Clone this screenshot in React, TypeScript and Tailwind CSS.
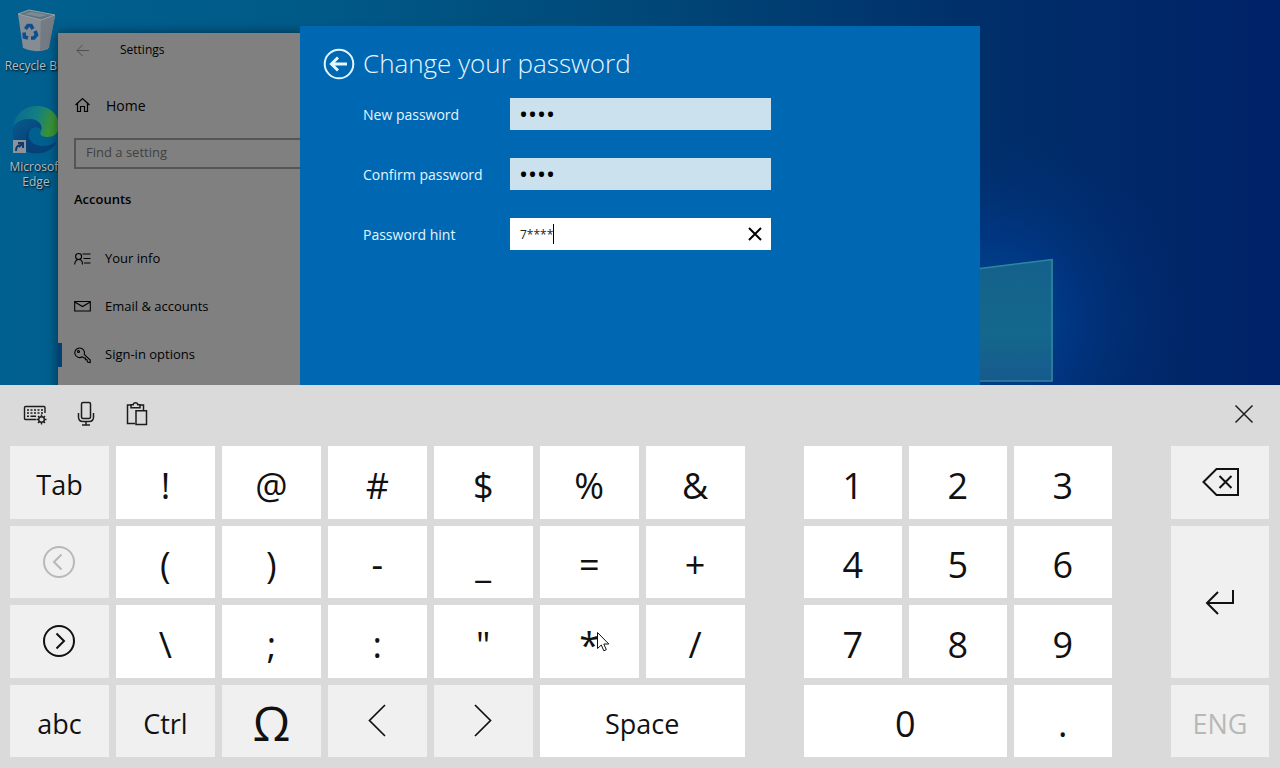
import { useState } from 'react';
import type { ReactNode } from 'react';

type KeyProps = {
  label: string;
  size?: 'symbol' | 'word' | 'large';
  muted?: boolean;
  disabled?: boolean;
  className?: string;
  onPress?: () => void;
  children?: ReactNode;
};

const sizes = {
  symbol: 'text-[36px]',
  word: 'text-[27px]',
  large: 'text-[48px] font-medium',
};

function Key({ label, size = 'symbol', muted, disabled, className = '', onPress, children }: KeyProps) {
  return (
    <button
      type="button"
      aria-label={label}
      disabled={disabled}
      onClick={onPress}
      className={`relative flex items-center justify-center leading-none ${sizes[size]} ${
        muted ? 'bg-[#f0f0f0]' : 'bg-white'
      } ${disabled ? 'text-[#b8b8b8]' : 'text-[#111111]'} ${className}`}
    >
      {children || <span className={size === 'symbol' ? 'pt-[7px]' : 'pt-[5px]'}>{label}</span>}
    </button>
  );
}

function Wallpaper() {
  return (
    <svg className="absolute inset-0 h-full w-full" viewBox="0 0 1280 385" preserveAspectRatio="xMinYMin slice" aria-hidden="true">
      <defs>
        <linearGradient id="sky" x1="0" y1="0" x2="1" y2="0">
          <stop offset="0" stopColor="#00608f" />
          <stop offset="0.25" stopColor="#005a88" />
          <stop offset="0.5" stopColor="#004878" />
          <stop offset="0.75" stopColor="#00306a" />
          <stop offset="1" stopColor="#002268" />
        </linearGradient>
        <radialGradient id="glow" gradientUnits="userSpaceOnUse" cx="990" cy="320" r="200">
          <stop offset="0" stopColor="#005596" stopOpacity="0.9" />
          <stop offset="0.4" stopColor="#003a8c" stopOpacity="0.7" />
          <stop offset="1" stopColor="#002c70" stopOpacity="0" />
        </radialGradient>
        <linearGradient id="pane" x1="0" y1="0" x2="0" y2="1">
          <stop offset="0" stopColor="#14618c" />
          <stop offset="0.6" stopColor="#14688c" />
          <stop offset="1" stopColor="#175a8e" />
        </linearGradient>
      </defs>
      <rect width="1280" height="385" fill="url(#sky)" />
      <rect width="1280" height="385" fill="url(#glow)" />
      <path d="M960 271 L1053 259 V381 H960 Z" fill="url(#pane)" />
      <path d="M960 271 L1052 259.500 V381 H960" fill="none" stroke="#2f86a0" strokeWidth="1.500" />
    </svg>
  );
}

function RecycleBinIcon() {
  return (
    <svg width="42" height="44" viewBox="0 0 42 44" aria-hidden="true">
      <path d="M3 5 L8 39 Q20 45 33 40 L40 7 L26 10 Z" fill="#858c93" />
      <path d="M26 10 L40 7 L34 39 L25 42 Z" fill="#747b83" />
      <path d="M3 5 L14 1 L40 6 L26 11 Z" fill="#5f747f" stroke="#98a1a7" strokeWidth="1" />
      <path d="M9 5 L16 3 L33 6 L25 8 Z" fill="#7c8b93" />
      <g fill="none" stroke="#0c4f91" strokeWidth="3.600">
        <path d="M10.500 20 L13 16.500 H16 L18 20" />
        <path d="M20 22 L21.500 26 L19 29 H16" />
        <path d="M13 29 L9.500 28 L9 23.500" />
      </g>
    </svg>
  );
}

function EdgeIcon() {
  return (
    <svg width="48" height="49" viewBox="0 0 48 49" aria-hidden="true">
      <defs>
        <linearGradient id="edgeTop" x1="0" y1="0.300" x2="1" y2="0.500">
          <stop offset="0" stopColor="#086b91" />
          <stop offset="0.5" stopColor="#137f83" />
          <stop offset="0.85" stopColor="#3a9336" />
        </linearGradient>
        <linearGradient id="edgeSide" x1="0" y1="0" x2="0.800" y2="1">
          <stop offset="0" stopColor="#075b8e" />
          <stop offset="1" stopColor="#063a75" />
        </linearGradient>
      </defs>
      <path d="M1 22 C3 8 13 1 25 1 C38 1 47 10 47 21 C47 29 41 32 35 32 C29 32 27 29 29 26 C31 21 27 14 18 14 C10 14 4 17 1 22 Z" fill="url(#edgeTop)" />
      <path d="M1 24 C3 17 10 14 17 14 C26 14 31 20 29 25 C26 20 18 22 16 29 C13 39 21 48 30 48 C12 51 -1 39 1 24 Z" fill="url(#edgeSide)" />
      <path d="M18 24 C14 32 19 41 31 41 C37 41 41 39 45 36 C42 44 33 49 25 48 C14 46 10 32 18 24 Z" fill="#064277" />
      <rect x="1" y="35" width="13" height="13" fill="#8d9499" />
      <path d="M4 46 C4 41 6 40 9 40 M6 38 H11 V43 M11 38 L7 42" fill="none" stroke="#123a6c" strokeWidth="2" />
    </svg>
  );
}

function DesktopIcon({ label, children }: { label: string; children: ReactNode }) {
  return (
    <a href="#" className="flex w-[72px] flex-col items-center gap-[5px] text-center text-[12px] leading-[15px] text-[#b4bcc2] [text-shadow:1px_1px_2px_#000]">
      {children}
      <span>{label}</span>
    </a>
  );
}

const navItems = [
  {
    label: 'Your info',
    icon: <path d="M.7 13.500 C.7 10 3 8.500 4.700 8.500 C6.500 8.500 8.500 10 8.500 13.500 M4.600 8.500 A3 3 0 1 0 4.600 2.500 A3 3 0 0 0 4.600 8.500 M8.500 3 H16.500 M9.500 7.500 H16.500 M10 12 H16.500" />,
  },
  {
    label: 'Email & accounts',
    icon: <path d="M.7 2.500 H16.300 V12 H.7 Z M.7 3 L8.500 7.500 L16.300 3" />,
  },
  {
    label: 'Sign-in options',
    active: true,
    icon: (
      <>
        <path d="M8.300 9.800 L10 11 H11.500 V12.700 H13 L13.500 15 L16.200 15.500 V13 L10.200 7.300 A4.800 4.800 0 1 0 8.300 9.800 Z" />
        <circle cx="4.500" cy="4.500" r="1" />
      </>
    ),
  },
];

function SettingsWindow() {
  return (
    <section aria-label="Settings" className="absolute top-[33px] left-[58px] h-full w-[480px] bg-[#808080] text-[14px] text-black shadow-[0_0_10px_rgba(0,0,0,0.5)]">
      <header className="flex h-[34px] items-center text-[12px]">
        <button type="button" aria-label="Back" className="ml-[18px] w-[44px] text-[#505050]">
          <svg width="13" height="13" viewBox="0 0 13 13" fill="none" stroke="currentColor" aria-hidden="true">
            <path d="M13 6.500 H1 M6.500 1 L1 6.500 L6.500 12" />
          </svg>
        </button>
        <span>Settings</span>
      </header>
      <a href="#" className="mt-[14px] flex h-12 items-center gap-[15px] px-4 text-[14px]">
        <svg width="17" height="16" viewBox="0 0 17 16" fill="none" stroke="currentColor" strokeWidth="1.200" aria-hidden="true">
          <path d="M1.500 8 L8.500 1.500 L15.500 8 M3.500 6.500 V14.500 H6.500 V9.500 H10.500 V14.500 H13.500 V6.500" />
        </svg>
        Home
      </a>
      <div className="mt-[9px] px-4">
        <input
          type="search"
          aria-label="Find a setting"
          placeholder="Find a setting"
          className="block h-[31px] w-full border-2 border-[#555555] bg-transparent px-[10px] pb-[3px] text-[13px] outline-none placeholder:text-[#404040]"
        />
      </div>
      <h2 className="mt-[15px] flex h-8 items-center px-4 text-[13px] font-semibold">Accounts</h2>
      <nav className="mt-[19px]">
        {navItems.map((item) => (
          <a key={item.label} href="#" className="relative flex h-12 items-center gap-[14px] px-4 text-[13px]">
            {item.active && <span className="absolute left-0 h-6 w-1 bg-[#063f78]" />}
            <svg width="17" height="17" viewBox="0 0 17 17" fill="none" stroke="currentColor" strokeWidth="1.100" aria-hidden="true">
              {item.icon}
            </svg>
            {item.label}
          </a>
        ))}
      </nav>
    </section>
  );
}

function PasswordDialog({ hint, setHint }: { hint: string; setHint: (value: string) => void }) {
  return (
    <section aria-label="Change your password" className="absolute top-[26px] left-[300px] h-full w-[680px] bg-[#0067b3] px-[23px] pt-[20px] text-[#e4f6ff]">
      <div className="flex h-9 items-center gap-2">
        <button type="button" aria-label="Back">
          <svg width="32" height="32" viewBox="0 0 32 32" fill="none" stroke="currentColor" aria-hidden="true">
            <circle cx="16" cy="16" r="14.300" strokeWidth="2" />
            <path d="M24 16 H9 M15 9.500 L8.500 16 L15 22.500" strokeWidth="3" />
          </svg>
        </button>
        <h1 className="pb-[2px] text-[26px] leading-[34px] font-light">Change your password</h1>
      </div>
      <form className="mt-4 ml-10 flex flex-col gap-7 text-[14px]">
        <div className="flex h-8 items-center">
          <label htmlFor="new-password" className="w-[147px]">New password</label>
          <input id="new-password" type="password" defaultValue="7890" className="h-8 w-[261px] bg-[#cce1ee] px-[9px] text-[24px] text-black outline-none" />
        </div>
        <div className="flex h-8 items-center">
          <label htmlFor="confirm-password" className="w-[147px]">Confirm password</label>
          <input id="confirm-password" type="password" defaultValue="7890" className="h-8 w-[261px] bg-[#cce1ee] px-[9px] text-[24px] text-black outline-none" />
        </div>
        <div className="flex h-8 items-center">
          <label htmlFor="password-hint" className="w-[147px]">Password hint</label>
          <div className="relative flex h-8 w-[261px] items-center bg-white text-[#222222]">
            <input
              id="password-hint"
              type="text"
              value={hint}
              onChange={(e) => setHint(e.target.value)}
              className="h-8 min-w-0 flex-1 bg-transparent pl-[10px] text-[12px] outline-none"
            />
            <span className="absolute left-[43px] h-5 w-px bg-black" />
            <button type="button" aria-label="Clear hint" onClick={() => setHint('')} className="flex h-8 w-8 items-center justify-center text-black">
              <svg width="14" height="14" viewBox="0 0 14 14" fill="none" stroke="currentColor" strokeWidth="2" aria-hidden="true">
                <path d="M1 1 L13 13 M13 1 L1 13" />
              </svg>
            </button>
          </div>
        </div>
      </form>
    </section>
  );
}

function Toolbar() {
  return (
    <div className="flex h-[61px] items-start pt-4 pr-[26px] pl-[23px] text-[#1c1c1c]">
      <button type="button" aria-label="Keyboard settings" className="w-[50px]">
        <svg width="25" height="26" viewBox="0 0 25 26" fill="none" stroke="currentColor" strokeWidth="1.400" aria-hidden="true">
          <path d="M13 18.500 H2.500 Q1.500 18.500 1.500 17.500 V6.500 Q1.500 5.500 2.500 5.500 H21 Q22 5.500 22 6.500 V12" />
          <path d="M4 9 H20 M4 12 H20" strokeDasharray="2 1.500" />
          <path d="M4 15.300 H6 M7.500 15.300 H13" />
          <circle cx="18.500" cy="18.500" r="2.800" />
          <path d="M18.500 13.500 V15.500 M18.500 21.500 V23.500 M13.500 18.500 H15.500 M21.500 18.500 H23.500 M15 15 L16.400 16.400 M20.600 20.600 L22 22 M15 22 L16.400 20.600 M20.600 16.400 L22 15" />
        </svg>
      </button>
      <button type="button" aria-label="Dictation" className="w-[52px] pl-1">
        <svg width="18" height="26" viewBox="0 0 18 26" fill="none" stroke="currentColor" strokeWidth="1.500" aria-hidden="true">
          <rect x="4.500" y="1.500" width="9" height="16" rx="1.500" />
          <path d="M1.500 12 V16 Q1.500 20.500 6 20.500 H12 Q16.500 20.500 16.500 16 V12 M9 20.500 V24 M5 24 H13" />
        </svg>
      </button>
      <button type="button" aria-label="Clipboard">
        <svg width="23" height="26" viewBox="0 0 23 26" fill="none" stroke="currentColor" strokeWidth="1.500" aria-hidden="true">
          <path d="M10 22.500 H2.500 V4 H6 M15 4 H18.500 V9" />
          <path d="M6 6.700 V3.700 H8.200 C8.500 1 12.500 1 12.800 3.700 H15 V6.700 Z" />
          <path d="M11 9.700 H21.500 V23.500 H11 Z" />
        </svg>
      </button>
      <button type="button" aria-label="Close keyboard" className="ml-auto pt-[3px]">
        <svg width="20" height="20" viewBox="0 0 20 20" fill="none" stroke="currentColor" strokeWidth="1.500" aria-hidden="true">
          <path d="M1.500 1.500 L18.500 18.500 M18.500 1.500 L1.500 18.500" />
        </svg>
      </button>
    </div>
  );
}

function PageArrow({ next }: { next?: boolean }) {
  return (
    <svg width="34" height="34" viewBox="0 0 34 34" fill="none" stroke="currentColor" strokeWidth="2" aria-hidden="true">
      <circle cx="17" cy="17" r="15" />
      <path d={next ? 'M14.500 9.500 L22 17 L14.500 24.500' : 'M19.500 9.500 L12 17 L19.500 24.500'} />
    </svg>
  );
}

function Chevron({ right }: { right?: boolean }) {
  return (
    <svg width="18" height="33" viewBox="0 0 18 33" fill="none" stroke="currentColor" strokeWidth="1.700" aria-hidden="true">
      <path d={right ? 'M1 1 L16.500 16.500 L1 32' : 'M17 1 L1.500 16.500 L17 32'} />
    </svg>
  );
}

function Keyboard({ onType, onBackspace }: { onType: (char: string) => void; onBackspace: () => void }) {
  const char = (c: string) => <Key key={c} label={c} onPress={() => onType(c)} />;

  return (
    <section aria-label="Touch keyboard" className="relative bg-[#dadada] pb-[11px]">
      <Toolbar />
      <div className="grid h-[311px] grid-cols-[734fr_308fr_98fr] gap-x-[59px] pr-[11px] pl-[10px]">
        <div className="grid grid-cols-7 grid-rows-4 gap-[7px]">
          <Key label="Tab" size="word" muted />
          {['!', '@', '#', '$', '%', '&'].map(char)}
          <Key label="Previous page" muted disabled>
            <PageArrow />
          </Key>
          {['(', ')', '-', '_', '=', '+'].map(char)}
          <Key label="Next page" muted>
            <PageArrow next />
          </Key>
          {['\\', ';', ':', '"'].map(char)}
          <Key label="*" onPress={() => onType('*')}>
            <span className="pt-[7px]">*</span>
            {/* mouse pointer */}
            <svg className="absolute top-[27px] left-[57px]" width="13" height="21" viewBox="0 0 13 21" fill="white" stroke="#111" aria-hidden="true">
              <path d="M.5 .5 V16.500 L4.300 13 L6.800 18.800 L9.300 17.700 L6.800 12 H11.800 Z" />
            </svg>
          </Key>
          {char('/')}
          <Key label="abc" size="word" muted />
          <Key label="Ctrl" size="word" muted />
          <Key label="Ω" size="large" muted />
          <Key label="Left" muted>
            <Chevron />
          </Key>
          <Key label="Right" muted>
            <Chevron right />
          </Key>
          <Key label="Space" size="word" className="col-span-2" onPress={() => onType(' ')} />
        </div>
        <div className="grid grid-cols-3 grid-rows-4 gap-[7px]">
          {['1', '2', '3', '4', '5', '6', '7', '8', '9'].map(char)}
          <Key label="0" className="col-span-2" onPress={() => onType('0')} />
          {char('.')}
        </div>
        <div className="grid grid-cols-1 grid-rows-4 gap-[7px]">
          <Key label="Backspace" muted onPress={onBackspace}>
            <svg width="38" height="30" viewBox="0 0 38 30" fill="none" stroke="currentColor" strokeWidth="2" aria-hidden="true">
              <path d="M2.500 15 L15.500 2 H37 V28 H15.500 Z M18.500 9 L30.500 21 M30.500 9 L18.500 21" />
            </svg>
          </Key>
          <Key label="Enter" muted className="row-span-2">
            <svg width="30" height="26" viewBox="0 0 30 26" fill="none" stroke="currentColor" strokeWidth="2" aria-hidden="true">
              <path d="M28 1 V14 H2 M13 3 L2 14 L13 25" />
            </svg>
          </Key>
          <Key label="ENG" size="word" muted disabled />
        </div>
      </div>
    </section>
  );
}

export default function App() {
  const [hint, setHint] = useState('7****');

  return (
    <main className="flex min-h-screen flex-col font-['Open_Sans','Noto_Sans',sans-serif]">
      <div className="relative min-h-[385px] flex-1 overflow-hidden">
        <Wallpaper />
        <div className="relative flex flex-col gap-8 pt-[9px]">
          <DesktopIcon label="Recycle Bin">
            <RecycleBinIcon />
          </DesktopIcon>
          <DesktopIcon label="Microsoft Edge">
            <EdgeIcon />
          </DesktopIcon>
        </div>
        <SettingsWindow />
        <PasswordDialog hint={hint} setHint={setHint} />
      </div>
      <Keyboard onType={(c) => setHint((prev) => prev + c)} onBackspace={() => setHint((prev) => prev.slice(0, -1))} />
    </main>
  );
}
